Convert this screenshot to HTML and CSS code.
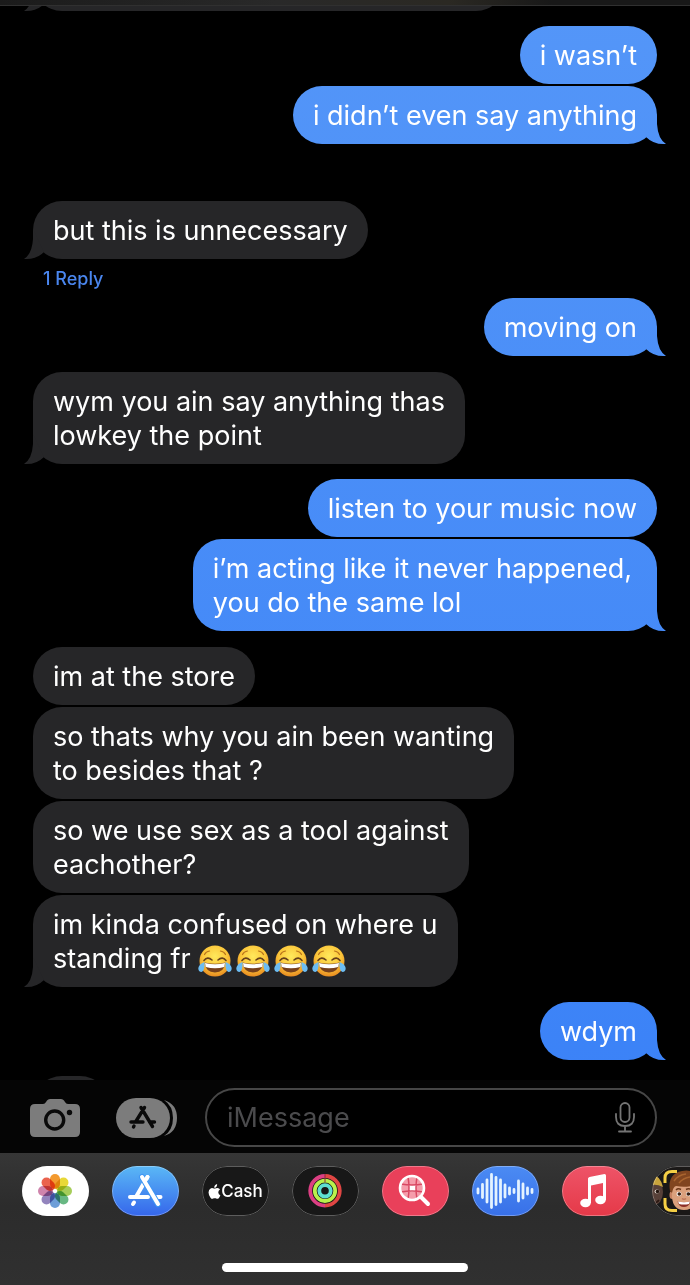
FILE: index.html
```html
<!DOCTYPE html>
<html lang="en">
<head>
    <meta charset="UTF-8">
    <meta name="viewport" content="width=device-width, initial-scale=1.0">
    <title>Messages</title>
    <link rel="stylesheet" href="styles.css">
</head>
<body>
    <!-- shared drawings -->
    <svg class="defs" width="0" height="0" aria-hidden="true">
        <defs>
            <radialGradient id="joyFace" cx="50%" cy="35%" r="65%">
                <stop offset="0" stop-color="#ffe95c"/>
                <stop offset="0.6" stop-color="#fbc63a"/>
                <stop offset="1" stop-color="#e88b20"/>
            </radialGradient>
            <symbol id="joy" viewBox="0 0 34 32">
                <circle cx="17" cy="16" r="15.5" fill="url(#joyFace)"/>
                <path d="M6.5 9.5Q8 6.5 11.5 6M27.5 9.5Q26 6.5 22.5 6" fill="none" stroke="#b9741b" stroke-width="1.2" stroke-linecap="round"/>
                <path d="M6 15.5Q9.500 11 14 15M20 15Q24.500 11 28 15.5" fill="none" stroke="#67401a" stroke-width="1.6" stroke-linecap="round"/>
                <path d="M6.5 17.5Q17 20 27.5 17.5Q26.5 27 17 27.5Q7.5 27 6.5 17.5Z" fill="#76401c"/>
                <path d="M7 18Q17 20.5 27 18L26.3 22Q17 24.5 7.7 22Z" fill="#fff"/>
                <path d="M6.5 17Q1 19 .3 23Q.3 27 3.5 27Q7 26 6.5 17Z" fill="#6cbcf2"/>
                <path d="M27.5 17Q33 19 33.700 23Q33.700 27 30.5 27Q27 26 27.5 17Z" fill="#6cbcf2"/>
            </symbol>
        </defs>
    </svg>

    <header class="topbar"></header>

    <main class="thread">
        <div class="bubble received tail cut-top"></div>
        <div class="bubble sent">i wasn’t</div>
        <div class="bubble sent tail">i didn’t even say anything</div>

        <div class="bubble received tail apart">but this is unnecessary</div>
        <a class="replies" href="#">1 Reply</a>

        <div class="bubble sent tail first">moving on</div>

        <div class="bubble received tail first">wym you ain say anything thas<br>lowkey the point</div>

        <div class="bubble sent first">listen to your music now</div>
        <div class="bubble sent tail wrapped">i’m acting like it never happened,<br>you do the same lol</div>

        <div class="bubble received first">im at the store</div>
        <div class="bubble received">so thats why you ain been wanting<br>to besides that ?</div>
        <div class="bubble received">so we use sex as a tool against<br>eachother?</div>
        <div class="bubble received tail">im kinda confused on where u<br>standing fr <span class="emojis" role="img" aria-label="😂😂😂😂"><svg><use href="#joy"/></svg><svg><use href="#joy"/></svg><svg><use href="#joy"/></svg><svg><use href="#joy"/></svg></span></div>

        <div class="bubble sent tail first">wdym</div>

        <div class="bubble received first cut-bottom"></div>
    </main>

    <form class="composer">
        <button class="tool" type="button" aria-label="Camera">
            <svg width="50" height="40" viewBox="0 0 50 40">
                <path fill="#7c7c7c" d="M5 6H13Q15 6 16 4L17 2.5Q18 1 20 1H31Q33 1 34 2.5L35 4Q36 6 38 6H45Q50 6 50 11V34Q50 39 45 39H5Q0 39 0 34V11Q0 6 5 6Z"/>
                <circle cx="24.7" cy="22" r="9" fill="none" stroke="#0a0a0a" stroke-width="3.4"/>
                <circle cx="39.5" cy="14.5" r="2.7" fill="#0a0a0a"/>
            </svg>
        </button>
        <button class="tool" type="button" aria-label="Apps">
            <svg width="61" height="40" viewBox="0 0 61 40">
                <rect width="54" height="40" rx="20" fill="#7c7c7c"/>
                <path d="M48 2Q61 6 61 20Q61 34 48 38Q57 32 57 20Q57 8 48 2Z" fill="#7c7c7c"/>
                <path d="M28.5 9.5L19.5 24M25 9.5L36.5 28.5M15 24H27M33.5 24H38.5M18 28L17.5 29" fill="none" stroke="#0a0a0a" stroke-width="3.4" stroke-linecap="round"/>
            </svg>
        </button>
        <div class="field">
            <input type="text" placeholder="iMessage" aria-label="iMessage">
            <button class="mic" type="button" aria-label="Dictate">
                <svg width="20" height="31" viewBox="0 0 20 31" fill="none" stroke="#747474" stroke-width="1.8" stroke-linecap="round">
                    <rect x="5.5" y="1" width="9" height="19" rx="4.5"/>
                    <path d="M1 12V15Q1 24 10 24Q19 24 19 15V12M10 24V29.5M4 29.5H16"/>
                </svg>
            </button>
        </div>
    </form>

    <footer class="drawer">
        <nav class="apps">
            <button class="app photos" type="button" aria-label="Photos">
                <svg viewBox="0 0 67 50">
                    <g class="petals" transform="translate(33 25)">
                        <rect x="-5" y="-17" width="10" height="15" rx="5" fill="#f39a2f"/>
                        <rect x="-5" y="-17" width="10" height="15" rx="5" fill="#e8d837" transform="rotate(45)"/>
                        <rect x="-5" y="-17" width="10" height="15" rx="5" fill="#a6cd59" transform="rotate(90)"/>
                        <rect x="-5" y="-17" width="10" height="15" rx="5" fill="#68b883" transform="rotate(135)"/>
                        <rect x="-5" y="-17" width="10" height="15" rx="5" fill="#6d9ed8" transform="rotate(180)"/>
                        <rect x="-5" y="-17" width="10" height="15" rx="5" fill="#9384bd" transform="rotate(225)"/>
                        <rect x="-5" y="-17" width="10" height="15" rx="5" fill="#cf84ac" transform="rotate(270)"/>
                        <rect x="-5" y="-17" width="10" height="15" rx="5" fill="#ea624d" transform="rotate(315)"/>
                    </g>
                </svg>
            </button>
            <button class="app store" type="button" aria-label="App Store">
                <svg viewBox="0 0 67 50" fill="none" stroke="#fff" stroke-width="4" stroke-linecap="round">
                    <path d="M35.5 11L24.5 30M18 31H36M45 31H48.5M22 36.5L21 38"/>
                    <path d="M30 11L46 38" stroke="#3f96f3" stroke-width="6"/>
                    <path d="M35.5 11L33 15M30 11L46 38"/>
                </svg>
            </button>
            <button class="app cash" type="button">
                <svg class="apple" viewBox="0 0 14 16" aria-hidden="true">
                    <path fill="#fff" d="M9.8 0Q9.9 2 8.8 3.1Q7.9 4.1 6.7 4Q6.6 2.4 7.6 1.3Q8.5 .2 9.8 0ZM7 4.9Q7.7 4.9 8.6 4.5Q10 4 11.2 4.5Q12.3 4.9 12.9 5.8Q11 7 11.1 9Q11.2 11.2 13.3 12Q12.7 13.7 11.7 14.9Q10.7 16.1 9.4 15.7L8.3 15.3Q7.3 15 6.2 15.4L5.2 15.8Q3.9 16.2 2.7 14.6Q.5 11.9 .6 8.8Q.7 5.8 2.8 4.7Q4.1 4 5.5 4.6Q6.5 5 7 4.9Z"/>
                </svg>
                <span>Cash</span>
            </button>
            <button class="app fitness" type="button" aria-label="Fitness">
                <svg viewBox="0 0 67 50" fill="none" stroke-width="3.8">
                    <path d="M33 39.6A14.8 14.8 0 0 1 33 10" stroke="#dc3f83"/>
                    <path d="M33 10A14.8 14.8 0 0 1 33 39.6" stroke="#e04643"/>
                    <circle cx="33" cy="24.8" r="10.2" stroke="#b8f14c"/>
                    <circle cx="33" cy="24.8" r="5.7" stroke="#5edfd0"/>
                    <path d="M33 8V16" stroke="#8c2638" stroke-width="1"/>
                </svg>
            </button>
            <button class="app images" type="button" aria-label="#images">
                <svg viewBox="0 0 67 50" fill="none" stroke="#fff">
                    <circle cx="30" cy="22" r="12" fill="#f59dab"/>
                    <path d="M27 19H34V26H27Z" fill="#fff" stroke="none"/>
                    <path d="M19 18Q30 20 41 18M19 26Q30 24 41 26M26 11Q28 22 26 33M35 11Q33 22 35 33" stroke="#d94862" stroke-width="1.5"/>
                    <circle cx="30" cy="22" r="12" stroke-width="2.6"/>
                    <path d="M39 31L46 38" stroke-width="4" stroke-linecap="round"/>
                </svg>
            </button>
            <button class="app audio" type="button" aria-label="Audio">
                <svg viewBox="0 0 67 50" stroke="#e4f3ff" stroke-width="2.8" stroke-linecap="round">
                    <path d="M6 23V27M10.5 18.5V31.5M15 14V36M19.5 8.5V41.5M24 11.5V38.5M28.5 14V36M33 19V31M37.5 22V28M42 23.5V26.5M46.5 15V35M51 18V32M55.5 22V28M60 23.5V26.5"/>
                </svg>
            </button>
            <button class="app music" type="button" aria-label="Music">
                <svg viewBox="0 0 67 50" fill="#fff">
                    <path d="M26 12.5Q26 11.5 27.5 11L42.5 8Q44 8 44 9.5V34H41V17L29 19.5V37H26Z"/>
                    <ellipse cx="23.5" cy="37" rx="5.3" ry="4.2"/>
                    <ellipse cx="38.5" cy="34" rx="5.3" ry="4.2"/>
                </svg>
            </button>
            <button class="app memoji" type="button" aria-label="Memoji">
                <svg viewBox="0 0 67 50">
                    <ellipse cx="2" cy="26" rx="9" ry="13" fill="#574038"/>
                    <path d="M0 9Q8 9 11 21Q5 18 0 19Z" fill="#c9a43c"/>
                    <ellipse cx="5" cy="25.5" rx="2.5" ry="2" fill="#d8cfc8"/>
                    <circle cx="5.5" cy="25.5" r="1.8" fill="#23150f"/>
                    <path d="M1 37Q5 37 7 34" stroke="#2b1812" stroke-width="1.5" fill="none"/>
                    <rect x="11" width="56" height="50" fill="#1a1817"/>
                    <ellipse cx="20" cy="29" rx="2.5" ry="4" fill="#c88463"/>
                    <path d="M20 20H44V31Q43 44 32 44Q21 44 20 31Z" fill="#dba07c"/>
                    <path d="M18 25Q15 8 30 5Q45 2 48 18L46 25Q43 23 42 19Q34 22 24 20Q21 21 20 27Z" fill="#81451f"/>
                    <path d="M22 15Q26 9 34 8M27 17Q31 12 38 11" stroke="#a8642f" stroke-width="1.5" fill="none"/>
                    <path d="M24 24Q26 22 29 23.5M34 23.5Q37 22 40 24" stroke="#6b3718" stroke-width="1.5" fill="none"/>
                    <ellipse cx="27" cy="28" rx="2.5" ry="2.2" fill="#fff"/>
                    <ellipse cx="36.5" cy="28" rx="2.5" ry="2.2" fill="#fff"/>
                    <circle cx="27.3" cy="28" r="1.8" fill="#3c2012"/>
                    <circle cx="36.3" cy="28" r="1.8" fill="#3c2012"/>
                    <path d="M30 32.5Q32 34 34 32.5" stroke="#bd7456" stroke-width="1.5" fill="none"/>
                    <path d="M25.5 35.5Q32 37 38.5 35.5Q37 41 32 41Q27 41 25.5 35.5Z" fill="#8c3028"/>
                    <path d="M26 35.5Q32 37 38 35.5L37 38Q32 39 27 38Z" fill="#fff"/>
                    <path d="M25 5.5H20Q13 5.5 13 12V17M13 32V38Q13 44.5 20 44.5H25" fill="none" stroke="#f4cf45" stroke-width="3"/>
                </svg>
            </button>
        </nav>
        <div class="home-indicator"></div>
    </footer>
</body>
</html>
```
FILE: styles.css
```css
* {
    box-sizing: border-box;
}
body {
    margin: 0;
    height: 100vh;
    display: flex;
    flex-direction: column;
    overflow: hidden;
    background-color: #000;
    color: #fff;
    font-family: Inter, "Liberation Sans", sans-serif;
    font-size: 27px;
    line-height: 34px;
}
button {
    border: none;
    padding: 0;
    background: none;
    color: inherit;
    font-family: inherit;
    cursor: pointer;
}
svg {
    display: block;
}
.defs {
    position: absolute;
}

/* conversation */
.topbar {
    flex: none;
    height: 6px;
    background: linear-gradient(to right, #1b1b1b, #292929 40%, #2b2923 65%, #181818 80%);
    border-bottom: 1px solid #303030;
}
.thread {
    flex: 1;
    min-height: 0;
    overflow: hidden;
    display: flex;
    flex-direction: column;
    align-items: flex-start;
    padding: 0 33px;
}
.bubble {
    position: relative;
    flex: none;
    margin-top: 2px;
    padding: 13px 20px 11px;
    min-height: 58px;
    border-radius: 29px;
    white-space: nowrap;
}
.received {
    background-color: #262628;
}
.sent {
    align-self: flex-end;
    background: linear-gradient(#5496f8, #3b82f7 85%) fixed;
}
.sent.wrapped {
    padding-right: 25px;
}
.sent.first {
    margin-top: 15px;
}
.received.first {
    margin-top: 16px;
}
.apart {
    margin-top: 57px;
}
.tail::after {
    content: "";
    position: absolute;
    right: -9px;
    bottom: 0;
    width: 39px;
    height: 30px;
    background: inherit;
    clip-path: path("M30 0V10Q31 25 39 30Q27 31 19 23L30 0Z");
}
.received.tail::after {
    right: auto;
    left: -9px;
    clip-path: path("M9 0V10Q8 25 0 30Q12 31 20 23L9 0Z");
}
.cut-top {
    width: 472px;
    margin-top: -53px;
    margin-bottom: 13px;
}
.cut-bottom {
    width: 76px;
}
.replies {
    flex: none;
    margin: 8px 10px 0;
    color: #4a86ee;
    font-size: 18px;
    font-weight: 500;
    line-height: 24px;
    text-decoration: none;
}
.replies + .sent.first {
    margin-top: 7px;
}
.emojis {
    display: inline-flex;
    align-items: center;
    gap: 4px;
    height: 24px;
    vertical-align: middle;
}
.emojis svg {
    flex: none;
    width: 34px;
    height: 32px;
}

/* message box */
.composer {
    flex: none;
    display: flex;
    align-items: center;
    padding: 8px 33px 6px 30px;
    background-color: #050505;
}
.tool {
    flex: none;
    margin-right: 36px;
}
.tool + .field {
    margin-left: -8px;
}
.field {
    flex: 1;
    min-width: 0;
    display: flex;
    align-items: center;
    height: 59px;
    padding: 0 20px;
    border: 2px solid #474747;
    border-radius: 30px;
    background-color: #000;
}
.field input {
    flex: 1;
    min-width: 0;
    padding: 0;
    border: none;
    outline: none;
    background: none;
    color: #fff;
    font: inherit;
}
.field input::placeholder {
    color: #4b4b4d;
    opacity: 1;
}

/* app drawer */
.drawer {
    flex: none;
    height: 132px;
    display: flex;
    flex-direction: column;
    justify-content: space-between;
    padding: 13px 0 13px 22px;
    background: linear-gradient(#363636, #2c2c2c 40%, #303030);
    overflow: hidden;
}
.apps {
    display: flex;
    gap: 23px;
}
.app {
    position: relative;
    flex: none;
    width: 67px;
    height: 50px;
    border-radius: 25px;
    overflow: hidden;
    background-color: #181818;
}
.app::after {
    content: "";
    position: absolute;
    inset: 0;
    border: 1px solid rgba(255, 255, 255, 0.3);
    border-radius: 25px;
}
.photos {
    background-color: #fff;
}
.petals rect {
    mix-blend-mode: multiply;
}
.store {
    background: linear-gradient(#5ab8f6, #3566eb);
}
.cash {
    display: flex;
    align-items: center;
    justify-content: center;
    font-size: 17px;
    font-weight: 500;
}
.apple {
    width: 13px;
    height: 15px;
}
.images {
    background-color: #e9405a;
}
.audio {
    background: linear-gradient(#4b8bf3, #3870e8);
}
.music {
    background: linear-gradient(#ee5468, #e53948);
}
.home-indicator {
    align-self: center;
    width: 246px;
    height: 9px;
    margin-right: 22px;
    border-radius: 5px;
    background-color: #fff;
}
```
